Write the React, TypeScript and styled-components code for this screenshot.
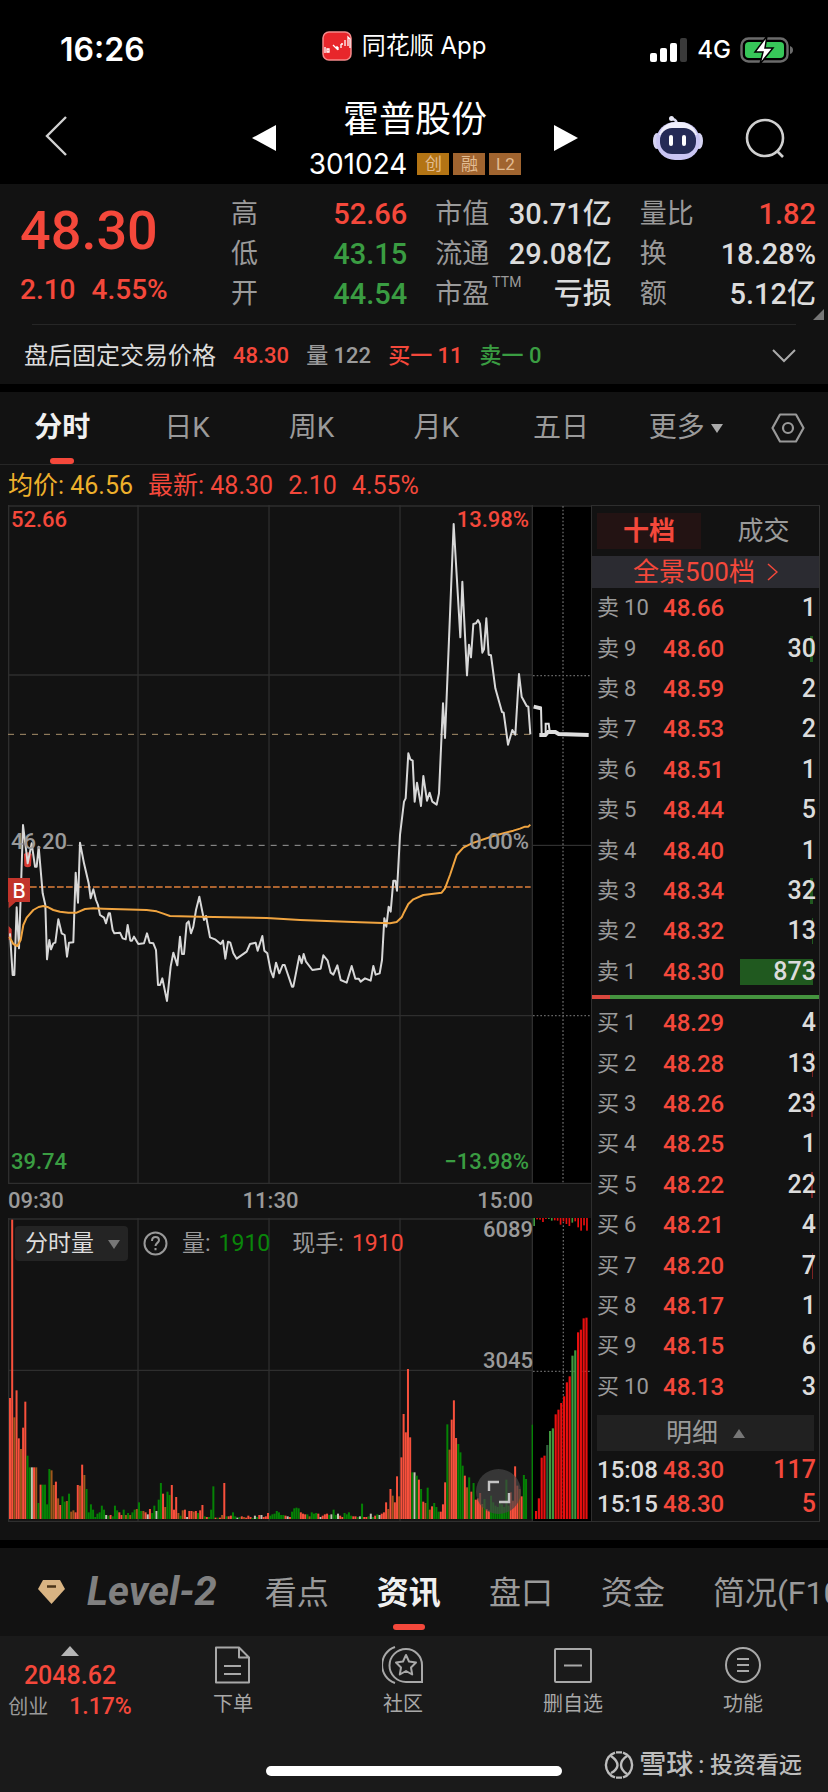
import React from 'react';
import styled, { createGlobalStyle } from 'styled-components';

const RED = '#f4483b';
const GREEN = '#3a9d42';
const GREY = '#9a9a9a';
const LIGHT = '#dcdcdc';
const LINE = '#2e2e2e';

const GlobalStyle = createGlobalStyle`
  *, *::before, *::after { box-sizing: border-box; }
  body {
    margin: 0;
    background: #1a1a1a;
    color: ${LIGHT};
    font-family: Roboto, "Noto Sans CJK SC", sans-serif;
    font-size: 24px;
    line-height: 1;
  }
  button, select {
    margin: 0;
    padding: 0;
    border: 0;
    background: none;
    color: inherit;
    font: inherit;
    appearance: none;
    cursor: pointer;
  }
  a { color: inherit; text-decoration: none; }
  svg { display: block; }
  dl, dd { margin: 0; }
`;

type Tone = 'red' | 'green' | 'grey' | 'light';
const tones: Record<Tone, string> = { red: RED, green: GREEN, grey: GREY, light: LIGHT };

const Page = styled.div`
  display: flex;
  flex-direction: column;
  min-height: 100vh;
  overflow: hidden;
  background: #121212;
`;

/* ---------- status bar and title bar ---------- */

const StatusBar = styled.div`
  display: grid;
  grid-template-columns: 1fr auto 1fr;
  align-items: center;
  height: 92px;
  padding: 0 34px 0 14px;
  background: #000;
  color: #fff;
`;
const Clock = styled.time`
  padding: 8px 0 0 46px;
  font: 600 32px/1 Inter, sans-serif;
`;
const AppName = styled.div`
  display: flex;
  align-items: center;
  gap: 10px;
  font-family: Inter, "Noto Sans CJK SC", sans-serif;
  font-size: 24px;
`;
const Signals = styled.div`
  display: flex;
  align-items: center;
  justify-content: flex-end;
  gap: 9px;
  padding-top: 8px;
  font: 500 24px/1 Inter, sans-serif;
`;
const TitleBar = styled.header`
  display: grid;
  grid-template-columns: 1fr 326px 1fr;
  align-items: center;
  height: 92px;
  padding: 0 43px 0 45px;
  background: #000;
  color: #fff;
`;
const TitleGroup = styled.div`
  display: flex;
  align-items: center;
  justify-content: space-between;
`;
const TitleText = styled.div`
  display: flex;
  flex-direction: column;
  align-items: center;
  gap: 12px;
`;
const StockName = styled.h1`
  margin: 0;
  font-size: 36px;
  font-weight: 400;
  line-height: 40px;
`;
const CodeRow = styled.div`
  display: flex;
  align-items: center;
  gap: 4px;
  height: 24px;
  font-family: Inter, sans-serif;
  font-size: 28px;
`;
const Code = styled.span`
  margin-right: 6px;
`;
const Badge = styled.span<{ $bg: string }>`
  width: 32px;
  height: 22px;
  background: ${(p) => p.$bg};
  color: #e2bc92;
  font: 17px/22px Roboto, "Noto Sans CJK SC", sans-serif;
  text-align: center;
`;
const TitleActions = styled.div`
  display: flex;
  align-items: center;
  justify-content: flex-end;
  gap: 42px;
`;

/* ---------- quote summary ---------- */

const Quote = styled.section`
  position: relative;
  padding-top: 10px;
`;
const QuoteGrid = styled.div`
  display: grid;
  grid-template-columns: 183px repeat(3, 1fr);
  gap: 28px;
  padding: 0 12px 0 20px;
`;
const PriceBlock = styled.div`
  display: flex;
  flex-direction: column;
  gap: 18px;
  padding-top: 10px;
  color: ${RED};
  white-space: nowrap;
`;
const LastPrice = styled.strong`
  font-size: 54px;
  font-weight: 500;
  line-height: 54px;
`;
const Change = styled.div`
  display: flex;
  gap: 16px;
  font-size: 28px;
  font-weight: 500;
  line-height: 28px;
`;
const StatList = styled.dl`
  display: flex;
  flex-direction: column;
`;
const Stat = styled.div`
  display: flex;
  align-items: center;
  justify-content: space-between;
  height: 40px;
  white-space: nowrap;
`;
const StatName = styled.dt`
  display: flex;
  align-items: flex-start;
  color: ${GREY};
  font-size: 27px;
`;
const Sup = styled.sup`
  margin: -6px 0 0 3px;
  font-size: 14px;
  line-height: 14px;
`;
const StatValue = styled.dd<{ $tone: Tone }>`
  color: ${(p) => tones[p.$tone]};
  font-size: 29px;
  font-weight: 500;
`;
const Corner = styled.i`
  position: absolute;
  right: 4px;
  bottom: 64px;
  border-bottom: 11px solid #777;
  border-left: 11px solid transparent;
`;
const AfterHours = styled.div`
  display: flex;
  align-items: center;
  height: 60px;
  margin: 10px 32px 0;
  padding-top: 3px;
  border-top: 1px solid #262626;
`;
const AfterItems = styled.div`
  display: flex;
  flex: 1;
  align-items: center;
  gap: 17px;
  margin-left: -8px;
  white-space: nowrap;
`;
const AfterTitle = styled.span`
  color: ${LIGHT};
  font-size: 24px;
`;
const AfterItem = styled.span<{ $tone: Tone }>`
  color: ${(p) => tones[p.$tone]};
  font-size: 22px;
  font-weight: 500;
`;
const Gap = styled.div`
  height: 8px;
  flex: none;
  background: #000;
`;

/* ---------- period tabs ---------- */

const PeriodTabs = styled.nav`
  display: grid;
  grid-template-columns: repeat(6, 1fr) 80px;
  height: 73px;
  border-bottom: 1px solid #262626;
`;
const TabButton = styled.button<{ $active?: boolean }>`
  position: relative;
  display: flex;
  align-items: center;
  justify-content: center;
  gap: 6px;
  color: ${(p) => (p.$active ? '#f0f0f0' : GREY)};
  font-size: 28px;
  font-weight: ${(p) => (p.$active ? 700 : 400)};
`;
const Underline = styled.i<{ $width: number }>`
  position: absolute;
  bottom: 0;
  left: 50%;
  width: ${(p) => p.$width}px;
  height: 6px;
  border-radius: 3px;
  background: ${RED};
  transform: translateX(-50%);
`;
const Legend = styled.div`
  display: flex;
  align-items: center;
  gap: 15px;
  height: 40px;
  padding: 0 8px;
  color: ${RED};
  font-size: 25px;
`;
const Average = styled.span`
  color: #eeb02c;
`;

/* ---------- chart area ---------- */

const Board = styled.main`
  display: grid;
  grid-template-columns: minmax(0, 1fr) 58px 229px;
  margin: 0 8px 18px;
`;
const ChartColumn = styled.div`
  display: flex;
  flex-direction: column;
`;
const PricePane = styled.div`
  position: relative;
  height: 679px;
`;
const VolumePane = styled.div`
  position: relative;
  height: 304px;
`;
const Plot = styled.svg<{ $bg?: string }>`
  width: 100%;
  height: 100%;
  background: ${(p) => p.$bg ?? 'none'};
`;
const TimeAxis = styled.div`
  display: grid;
  grid-template-columns: 1fr auto 1fr;
  align-items: center;
  height: 34px;
  color: ${GREY};
  font-size: 22px;
  font-weight: 500;
`;
const RightTime = styled.span`
  text-align: right;
`;
const PlotLabel = styled.span<{ $tone: Tone; $top: string; $right?: boolean }>`
  position: absolute;
  top: ${(p) => p.$top};
  ${(p) => (p.$right ? 'right: 4px' : 'left: 3px')};
  color: ${(p) => tones[p.$tone]};
  font-size: 22px;
  font-weight: 500;
`;
const VolumeLabel = styled(PlotLabel)`
  right: 0;
`;
const BuyMark = styled.span`
  position: absolute;
  top: 55%;
  left: 0;
  width: 22px;
  height: 24px;
  background: #c2342b;
  color: #fff;
  font: 500 20px/26px Inter, sans-serif;
  text-align: center;
`;
const VolumeHead = styled.div`
  position: absolute;
  top: 8px;
  left: 7px;
  display: flex;
  align-items: center;
  color: ${GREY};
  white-space: nowrap;
`;
const SelectBox = styled.label`
  position: relative;
  display: block;
  width: 113px;
  height: 35px;
  margin-right: 15px;
`;
const KindSelect = styled.select`
  width: 100%;
  height: 100%;
  padding-left: 10px;
  border-radius: 4px;
  background: #242424;
  color: ${LIGHT};
  font-size: 23px;
`;
const Caret = styled.i<{ $up?: boolean; $color?: string }>`
  border: 6px solid transparent;
  ${(p) => (p.$up ? 'border-bottom: 9px solid #777; border-top: 0' : `border-top: 9px solid ${p.$color ?? '#777'}; border-bottom: 0`)};
`;
const SelectCaret = styled(Caret)`
  position: absolute;
  top: 14px;
  right: 8px;
  pointer-events: none;
`;
const HeadItem = styled.span`
  display: flex;
  gap: 8px;
  margin-left: 14px;
  font-size: 23px;
  & + & { margin-left: 22px; }
`;
const HeadValue = styled.span<{ $color: string }>`
  color: ${(p) => p.$color};
`;
const ExpandButton = styled.button`
  position: absolute;
  right: 12px;
  bottom: 8px;
  display: grid;
  place-items: center;
  width: 45px;
  height: 45px;
  border-radius: 50%;
  background: rgba(70, 70, 70, 0.7);
`;
const ExtGap = styled.div`
  height: 34px;
`;

/* ---------- order book ---------- */

const Book = styled.aside`
  display: flex;
  flex-direction: column;
  border: 1px solid ${LINE};
  border-right-color: #333;
`;
const BookTabs = styled.div`
  display: grid;
  grid-template-columns: 104px 1fr;
  align-items: center;
  gap: 12px;
  height: 50px;
  padding: 0 5px;
`;
const BookTab = styled.button<{ $active?: boolean }>`
  height: 36px;
  background: ${(p) => (p.$active ? '#231313' : 'none')};
  color: ${(p) => (p.$active ? RED : GREY)};
  font-size: 26px;
  font-weight: ${(p) => (p.$active ? 700 : 400)};
`;
const Panorama = styled.a`
  display: flex;
  align-items: center;
  justify-content: center;
  gap: 12px;
  height: 32px;
  background: #2b2b31;
  color: ${RED};
  font-size: 26px;
`;
const Levels = styled.table`
  display: flex;
  flex: 1;
  flex-direction: column;
`;
const LevelBody = styled.tbody`
  display: flex;
  flex: 1;
  flex-direction: column;
`;
const LevelRow = styled.tr`
  display: grid;
  flex: 1;
  grid-template-columns: 66px 1fr 82px;
  align-items: center;
  padding: 0 3px 0 5px;
`;
const LevelName = styled.th`
  display: flex;
  align-items: center;
  gap: 5px;
  padding: 0;
  color: ${GREY};
  font-size: 22px;
  font-weight: 400;
`;
const LevelPrice = styled.td`
  padding: 0;
  color: ${RED};
  font-size: 24px;
  font-weight: 500;
`;
const LevelQty = styled.td<{ $bar: number; $color: string; $tone?: Tone }>`
  height: 26px;
  padding: 0;
  background: linear-gradient(${(p) => p.$color}, ${(p) => p.$color}) no-repeat right 3px top / ${(p) => p.$bar}px 100%;
  color: ${(p) => tones[p.$tone ?? 'light']};
  font-size: 25px;
  font-weight: 500;
  line-height: 26px;
  text-align: right;
`;
const Ratio = styled.div`
  height: 4px;
  margin: 3px 0 4px;
  background: linear-gradient(to right, #d9483e 8%, #45943f 8%);
`;
const DetailButton = styled.button`
  display: flex;
  align-items: center;
  justify-content: center;
  gap: 15px;
  height: 36px;
  margin: 8px 5px 2px;
  background: #212121;
  color: ${GREY};
  font-size: 26px;
`;
const Deals = styled.table`
  display: block;
  tbody { display: block; }
  tr { height: 34px; }
`;
const DealTime = styled.th`
  padding: 0;
  font-size: 24px;
  font-weight: 500;
  text-align: left;
`;

/* ---------- bottom navigation ---------- */

const InfoTabs = styled.nav`
  display: flex;
  align-items: center;
  gap: 48px;
  height: 88px;
  padding-left: 38px;
  overflow: hidden;
  white-space: nowrap;
`;
const LevelTwo = styled.a`
  display: flex;
  align-items: center;
  gap: 22px;
  color: #808080;
  font-size: 40px;
  font-style: italic;
  font-weight: 700;
`;
const InfoTab = styled.a<{ $active?: boolean }>`
  position: relative;
  display: flex;
  flex: none;
  align-items: center;
  height: 82px;
  margin-bottom: 6px;
  padding-top: 8px;
  color: ${(p) => (p.$active ? '#f0f0f0' : GREY)};
  font-size: 32px;
  font-weight: ${(p) => (p.$active ? 700 : 400)};
`;
const BottomBar = styled.footer`
  flex: 1;
  background: #1a1a1a;
`;
const Actions = styled.div`
  display: grid;
  grid-template-columns: 148px repeat(4, 1fr);
  height: 112px;
`;
const IndexCell = styled.a`
  display: flex;
  flex-direction: column;
  align-items: center;
  gap: 7px;
  padding: 10px 8px 0 0;
  color: ${RED};
  font-size: 25px;
  font-weight: 500;
`;
const IndexRow = styled.span`
  display: flex;
  align-items: center;
  gap: 21px;
  font-size: 23px;
`;
const IndexName = styled.span`
  color: ${GREY};
  font-size: 20px;
  font-weight: 400;
`;
const Action = styled.button`
  display: flex;
  flex-direction: column;
  align-items: center;
  gap: 10px;
  padding-top: 10px;
  color: #a8a8a8;
  font-size: 20px;
`;
const HomeRow = styled.div`
  display: grid;
  grid-template-columns: 1fr 296px 1fr;
  align-items: center;
  height: 34px;
`;
const HomeBar = styled.i`
  grid-column: 2;
  height: 10px;
  margin-top: 12px;
  border-radius: 5px;
  background: #fff;
`;
const Watermark = styled.div`
  display: flex;
  align-items: center;
  justify-content: flex-end;
  gap: 5px;
  padding-right: 26px;
  color: #bdbdbd;
  font-size: 23px;
  font-weight: 500;
  white-space: nowrap;
`;
const Brand = styled.b`
  font-size: 27px;
  font-weight: 500;
`;

/* ---------- chart data ---------- */

const PRICE_PATH =
  '30,1300 38,1425 43,1425 50,1222 57,1345 69,975 77,1040 83,1090 95,1030 105,1100 110,1100 116,1040 128,1180 136,1215 141,1378 148,1320 153,1348 160,1330 166,1328 175,1258 185,1300 194,1305 201,1370 207,1328 220,1327 227,1118 234,1208 240,1028 252,1090 266,1150 272,1195 280,1168 288,1200 294,1215 300,1245 312,1253 318,1270 326,1240 330,1240 338,1290 343,1300 360,1298 368,1315 377,1318 383,1275 391,1322 396,1322 402,1310 415,1332 432,1330 441,1300 449,1328 460,1330 468,1350 474,1455 480,1455 487,1435 501,1503 512,1400 520,1358 532,1396 540,1310 546,1362 552,1362 560,1270 566,1264 573,1300 580,1280 588,1230 598,1190 612,1260 618,1248 630,1312 645,1318 662,1332 669,1322 676,1376 684,1325 691,1328 700,1360 710,1376 740,1355 750,1332 767,1328 773,1352 787,1308 793,1352 802,1360 812,1412 820,1432 828,1388 838,1420 848,1395 854,1395 876,1460 880,1460 898,1368 905,1390 911,1362 918,1385 937,1410 962,1406 970,1366 983,1382 992,1418 1000,1424 1012,1396 1022,1440 1040,1448 1055,1398 1066,1436 1076,1436 1082,1445 1095,1435 1112,1442 1120,1398 1127,1424 1139,1420 1146,1380 1153,1255 1159,1280 1166,1220 1172,1235 1180,1142 1186,1142 1191,1172 1200,1005 1212,905 1217,895 1225,760 1231,778 1238,782 1244,905 1251,848 1263,918 1270,828 1281,902 1289,878 1297,905 1310,914 1317,880 1329,610 1335,714 1361,72 1381,412 1387,245 1401,526 1407,434 1413,472 1420,372 1428,370 1434,360 1440,372 1447,458 1452,448 1459,355 1466,464 1473,466 1486,565 1506,636 1511,638 1524,734 1537,690 1546,704 1557,522 1565,590 1580,618 1585,620 1591,703';
const AVERAGE_PATH =
  '28,1310 40,1332 52,1338 62,1320 70,1275 80,1253 100,1230 116,1221 130,1218 145,1222 160,1230 180,1235 205,1238 230,1238 255,1227 280,1225 310,1226 440,1230 470,1234 490,1241 510,1248 600,1250 800,1254 900,1260 1080,1267 1170,1270 1190,1266 1205,1252 1213,1235 1225,1212 1240,1198 1270,1185 1325,1178 1335,1165 1350,1125 1370,1065 1390,1043 1415,1030 1480,1008 1540,992 1560,986 1575,980 1585,980 1591,974';

const VOLUMES =
  'r363 r898 o305 r386 r242 o210 r274 r352 g190 g155 w155 r155 o155 g48 r103 g103 g103 g44 g150 o146 o102 r112 o62 r42 g68 g52 o54 g76 o22 o26 r20 r102 o100 r163 o132 g90 g20 g44 g28 g6 g16 g20 g40 g28 w12 g10 r12 g8 g40 g26 r20 r12 g28 o12 g18 o12 g20 g28 o30 g50 g24 o24 r20 w14 r30 g18 g40 w24 g58 g108 r76 o36 g82 g72 r102 r28 r66 o18 g10 o26 r28 w6 r24 r24 o22 r24 g18 r26 r42 g8 r6 g6 g28 g98 r4 g4 r4 o12 r108 g8 r8 r10 g20 g8 w4 g6 r8 o6 r4 r10 r6 g3 w10 g6 r12 w12 r6 r8 r18 g10 g14 g16 g24 g20 g12 g12 r10 w8 r6 g22 g32 g34 g32 r20 r16 r14 g14 o8 g20 g16 g18 r16 w6 r10 r14 r16 g12 w14 g28 g12 w16 r10 r6 g18 g14 g20 g10 r8 r8 g6 w8 g46 r6 r6 g8 w16 g6 r10 g14 w12 r16 r20 r50 o30 r90 o70 r50 r128 o68 r185 r315 r260 r450 r245 g140 w140 g130 r118 g90 r52 o48 g94 o28 r38 g48 g36 g22 r22 r44 r110 g284 o208 r298 r356 r243 g225 g200 g160 r130 o95 g125 r82 g108 r58 r62 r78 o45 g60 r30 r25 g70 g50 g40 g36 g50 g44 g36 g118 g40 r80 r55 r158 r100 o90 r68 g132 g120 g0 g0 g283'.split(' ');
const BAR_COLORS: Record<string, string> = { r: '#f8503c', g: '#058205', o: '#a0561c', w: '#c4c4b4' };

const AUCTION = 'r24 r62 r184 r190 d222 g264 g272 r314 r328 r348 r368 r410 r428 g490 g506 r560 r568 r602 r604'.split(' ');
const AUCTION_TOP = 'g24 r4 r5 r12 r3 g3 g8 r7 r8 r20 r10 r18 r24 g14 r10 r28 r38 r22 r38'.split(' ');
const AUCTION_COLORS: Record<string, string> = { r: '#e80f0f', g: '#3f9a3f', d: '#2d5f3a' };

type Level = [string, string, number, number];
const SELLS: Level[] = [
  ['10', '48.66', 1, 0], ['9', '48.60', 30, 3], ['8', '48.59', 2, 0], ['7', '48.53', 2, 0], ['6', '48.51', 1, 0],
  ['5', '48.44', 5, 0], ['4', '48.40', 1, 0], ['3', '48.34', 32, 3], ['2', '48.32', 13, 1], ['1', '48.30', 873, 73],
];
const BUYS: Level[] = [
  ['1', '48.29', 4, 0], ['2', '48.28', 13, 1], ['3', '48.26', 23, 2], ['4', '48.25', 1, 0], ['5', '48.22', 22, 2],
  ['6', '48.21', 4, 0], ['7', '48.20', 7, 1], ['8', '48.17', 1, 0], ['9', '48.15', 6, 0], ['10', '48.13', 3, 0],
];

type StatItem = { name: string; value: string; tone: Tone; sup?: string };
const STATS: StatItem[][] = [
  [
    { name: '高', value: '52.66', tone: 'red' },
    { name: '低', value: '43.15', tone: 'green' },
    { name: '开', value: '44.54', tone: 'green' },
  ],
  [
    { name: '市值', value: '30.71亿', tone: 'light' },
    { name: '流通', value: '29.08亿', tone: 'light' },
    { name: '市盈', value: '亏损', tone: 'light', sup: 'TTM' },
  ],
  [
    { name: '量比', value: '1.82', tone: 'red' },
    { name: '换', value: '18.28%', tone: 'light' },
    { name: '额', value: '5.12亿', tone: 'light' },
  ],
];

/* ---------- icons ---------- */

const AppLogo = () => (
  <svg width="30" height="30" viewBox="0 0 30 30">
    <rect x="1" y="1" width="28" height="28" rx="6" fill="#e8262b" stroke="#f5898a" strokeWidth="1.5" />
    <path d="M3 16v6M5 18v3h2v-3zM11 14l4 4v-3M16 16v3M19 13v4M19 13h2M23 9v6M26 15V6l2 2v9" stroke="#fff" strokeWidth="1.3" fill="none" />
  </svg>
);
const SignalIcon = () => (
  <svg width="38" height="24" viewBox="0 0 38 24">
    <rect x="0" y="15" width="7" height="9" rx="2" fill="#fff" />
    <rect x="10" y="10" width="7" height="14" rx="2" fill="#fff" />
    <rect x="20" y="5" width="7" height="19" rx="2" fill="#fff" />
    <rect x="30" y="0" width="7" height="24" rx="2" fill="#3a3a3a" />
  </svg>
);
const BatteryIcon = () => (
  <svg width="54" height="28" viewBox="0 0 54 28">
    <rect x="1.5" y="2.5" width="46" height="23" rx="7" fill="none" stroke="#6b6b6b" strokeWidth="2.4" />
    <rect x="5" y="6" width="39" height="16" rx="4" fill="#37c759" />
    <path d="M50 10q3 1 3 4t-3 4z" fill="#6b6b6b" />
    <path d="M27 0L15 16h8l-3 12 13-16h-8z" fill="#fff" stroke="#000" strokeWidth="1.5" />
  </svg>
);
const BackIcon = () => (
  <svg width="24" height="40" viewBox="0 0 24 40">
    <path d="M21 1L2 20l19 19" fill="none" stroke="#d0d0d0" strokeWidth="2.4" />
  </svg>
);
const Arrow = ({ flip }: { flip?: boolean }) => (
  <svg width="24" height="26" viewBox="0 0 24 26">
    <path d={flip ? 'M0 0v26l24-13z' : 'M24 0v26L0 13z'} fill="#fff" />
  </svg>
);
const RobotIcon = () => (
  <svg width="50" height="46" viewBox="0 0 50 46">
    <path d="M24 10c0-3-1-5-4-6" stroke="#d8d8ee" strokeWidth="2.4" fill="none" />
    <circle cx="18.5" cy="3.5" r="2.5" fill="#e6e6f4" />
    <ellipse cx="4" cy="26" rx="4" ry="8" fill="#d5d3f2" />
    <ellipse cx="46" cy="26" rx="4" ry="8" fill="#d5d3f2" />
    <rect x="3" y="7" width="44" height="38" rx="19" fill="#c9c5f3" />
    <path d="M6 20q4-13 19-13t19 13" fill="#efeefb" />
    <rect x="7" y="13" width="36" height="26" rx="12" fill="#252b56" />
    <rect x="16" y="20" width="4" height="11" rx="2" fill="#fff" />
    <rect x="29" y="20" width="4" height="11" rx="2" fill="#fff" />
  </svg>
);
const SearchIcon = () => (
  <svg width="40" height="40" viewBox="0 0 40 40" fill="none" stroke="#d0d0d0" strokeWidth="2.6">
    <circle cx="20" cy="20" r="18" />
    <path d="M32 33l6 6" />
  </svg>
);
const ChevronDown = () => (
  <svg width="24" height="14" viewBox="0 0 24 14">
    <path d="M1 1l11 11L23 1" fill="none" stroke="#aaa" strokeWidth="2" />
  </svg>
);
const HexIcon = () => (
  <svg width="34" height="30" viewBox="0 0 34 30" fill="none" stroke="#999" strokeWidth="2.2">
    <path d="M9 1.5h16L32.5 15 25 28.500H9L1.500 15z" strokeLinejoin="round" />
    <circle cx="17" cy="15" r="5" />
  </svg>
);
const HelpIcon = () => (
  <svg width="25" height="25" viewBox="0 0 25 25" fill="none" stroke="#999" strokeWidth="2">
    <circle cx="12.500" cy="12.500" r="11" />
    <path d="M9 10q0-4 3.500-4t3.500 3.300c0 2.500-3.500 2.700-3.500 5.700M12.500 17v2.200" />
  </svg>
);
const ExpandIcon = () => (
  <svg width="24" height="24" viewBox="0 0 24 24" fill="none" stroke="#c4c4c4" strokeWidth="2.400">
    <path d="M2 11V2h10M22 13v9H12" />
  </svg>
);
const ChevronRight = () => (
  <svg width="11" height="18" viewBox="0 0 11 18">
    <path d="M1 1l9 8-9 8" fill="none" stroke={RED} strokeWidth="1.500" />
  </svg>
);
const GemIcon = () => (
  <svg width="27" height="24" viewBox="0 0 27 24">
    <path d="M5 0h17l5 9-13.500 15L0 9z" fill="#d9b483" />
    <path d="M9 6.500h9" stroke="#4a3418" strokeWidth="2.500" />
  </svg>
);
const UpIcon = () => (
  <svg width="18" height="10" viewBox="0 0 18 10">
    <path d="M9 0l9 10H0z" fill="#b5b5b5" />
  </svg>
);
const DocIcon = () => (
  <svg width="40" height="38" viewBox="0 0 40 38" fill="none" stroke="#a8a8a8" strokeWidth="2">
    <path d="M3 1.500h23l10 10v25H3zM26 1.500v10h10M11 20h17M11 28h17" strokeLinejoin="round" />
  </svg>
);
const CommunityIcon = () => (
  <svg width="42" height="38" viewBox="0 0 42 38" fill="none" stroke="#a8a8a8" strokeWidth="2">
    <path d="M13 1A19 19 0 0 0 13 37" />
    <path d="M24 3a16 16 0 0 0 0 33h16V19A16 16 0 0 0 24 3z" />
    <path d="M24 9l3 6.500 7 1-5 5 1.200 7L24 25l-6.200 3.500 1.200-7-5-5 7-1z" strokeLinejoin="round" />
  </svg>
);
const RemoveIcon = () => (
  <svg width="38" height="38" viewBox="0 0 38 38" fill="none" stroke="#a8a8a8" strokeWidth="2">
    <rect x="1" y="3" width="36" height="33" rx="1" />
    <path d="M10 19.500h18" />
  </svg>
);
const MenuIcon = () => (
  <svg width="36" height="38" viewBox="0 0 36 38" fill="none" stroke="#a8a8a8" strokeWidth="2">
    <circle cx="18" cy="19" r="17" />
    <path d="M12 13h12M12 19h12M12 25h12" />
  </svg>
);
const SnowballIcon = () => (
  <svg width="30" height="30" viewBox="0 0 30 30" fill="none" stroke="#bdbdbd" strokeWidth="2.400">
    <path d="M11 2.600A13 13 0 0 0 11 27.400M19 27.400A13 13 0 0 0 19 2.600M12 27.600h6M12 2.400h6" />
    <path d="M7 6q7 5 6.500 9.500T7 23M23 6q-6 4-6 9t6 9" strokeWidth="2.400" />
  </svg>
);

/* ---------- charts ---------- */

const PriceChart = () => (
  <PricePane>
    <Plot viewBox="24 15 1575 2037" preserveAspectRatio="none">
      <g stroke={LINE} strokeWidth="4" fill="none">
        <path d="M24 18H1599M24 525H1599M24 1547H1599M24 2050H1599M26 15V2052M414 15V2052M807 15V2052M1200 15V2052M1597 15V2052" />
      </g>
      <path d="M24 703H1592" stroke="#a8906a" strokeWidth="3" strokeDasharray="18 18" />
      <path d="M200 1036H1400" stroke="#9a9a9a" strokeWidth="3" strokeDasharray="18 18" />
      <path d="M90 1161H1592" stroke="#e07f3a" strokeWidth="5" strokeDasharray="20 7" />
      <path d="M26 1278l9 10v25l-9 8zM72 1062q12-10 23 0l-2 36q-10 8-20 0z" fill="#d83a32" />
      <path d="M26 1205h22L26 1225z" fill="#c2342b" />
      <polyline points={PRICE_PATH} fill="none" stroke="#d8d8d8" strokeWidth="6" strokeLinejoin="round" />
      <polyline points={AVERAGE_PATH} fill="none" stroke="#f0a440" strokeWidth="6" strokeLinejoin="round" />
    </Plot>
    <PlotLabel $tone="red" $top="4px">52.66</PlotLabel>
    <PlotLabel $tone="red" $top="4px" $right>13.98%</PlotLabel>
    <PlotLabel $tone="grey" $top="326px">46.20</PlotLabel>
    <PlotLabel $tone="grey" $top="326px" $right>0.00%</PlotLabel>
    <PlotLabel $tone="green" $top="646px">39.74</PlotLabel>
    <PlotLabel $tone="green" $top="646px" $right>−13.98%</PlotLabel>
    <BuyMark>B</BuyMark>
  </PricePane>
);

const VolumeChart = () => (
  <VolumePane>
    <Plot viewBox="24 24 1575 912" preserveAspectRatio="none">
      <g stroke={LINE} strokeWidth="4" fill="none">
        <path d="M24 27H1599M24 481H1599M24 934H1599M26 24V936M414 24V936M807 24V936M1200 24V936M1597 24V936" />
      </g>
      {VOLUMES.map((v, i) => {
        const h = Number(v.slice(1));
        return <rect key={i} x={27 + i * 6.56} y={927 - h} width="6" height={h} fill={BAR_COLORS[v[0]]} />;
      })}
    </Plot>
    <VolumeLabel $tone="grey" $top="1px" $right>6089</VolumeLabel>
    <VolumeLabel $tone="grey" $top="132px" $right>3045</VolumeLabel>
    <VolumeHead>
      <SelectBox>
        <KindSelect aria-label="指标" defaultValue="分时量">
          <option>分时量</option>
        </KindSelect>
        <SelectCaret />
      </SelectBox>
      <HelpIcon />
      <HeadItem>量: <HeadValue $color="#0a860a">1910</HeadValue></HeadItem>
      <HeadItem>现手: <HeadValue $color={RED}>1910</HeadValue></HeadItem>
    </VolumeHead>
    <ExpandButton aria-label="全屏"><ExpandIcon /></ExpandButton>
  </VolumePane>
);

const AuctionColumn = () => (
  <ChartColumn>
    <PricePane>
      <Plot $bg="#000" viewBox="1599 15 174 2037" preserveAspectRatio="none">
        <path d="M1599 18H1773M1599 1036H1773M1599 2050H1773" stroke="#3a3a3a" strokeWidth="3" />
        <path d="M1689 18V2050M1599 527H1773M1599 1547H1773" stroke="#666" strokeWidth="4" strokeDasharray="5 6" />
        <path d="M1601 620l22 5" stroke="#dedede" strokeWidth="12" />
        <path d="M1623 620l2 85h12v-34h9l3 22" fill="none" stroke="#dedede" strokeWidth="6" />
        <path d="M1618 705h18l8-9h22l10 6 90 3" fill="none" stroke="#dedede" strokeWidth="12" />
      </Plot>
    </PricePane>
    <ExtGap />
    <VolumePane>
      <Plot $bg="#000" viewBox="1599 24 174 912" preserveAspectRatio="none">
        <path d="M1690 24V927M1599 484H1773" stroke="#666" strokeWidth="4" strokeDasharray="5 6" />
        <path d="M1599 935H1773" stroke={LINE} strokeWidth="4" />
        {AUCTION.map((v, i) => {
          const h = Number(v.slice(1));
          return <rect key={i} x={1605 + i * 8.4} y={927 - h} width="6.5" height={h} fill={AUCTION_COLORS[v[0]]} />;
        })}
        {AUCTION_TOP.map((v, i) => (
          <rect key={i} x={1600 + i * 8.8} y="24" width="5" height={v.slice(1)} fill={AUCTION_COLORS[v[0]]} />
        ))}
      </Plot>
    </VolumePane>
  </ChartColumn>
);

const LevelTable = ({ side, rows, color }: { side: string; rows: Level[]; color: string }) => (
  <Levels>
    <LevelBody>
      {rows.map(([n, price, qty, bar]) => (
        <LevelRow key={n}>
          <LevelName scope="row"><span>{side}</span><span>{n}</span></LevelName>
          <LevelPrice>{price}</LevelPrice>
          <LevelQty $bar={bar} $color={color}>{qty}</LevelQty>
        </LevelRow>
      ))}
    </LevelBody>
  </Levels>
);

const OrderBook = () => (
  <Book>
    <BookTabs>
      <BookTab $active>十档</BookTab>
      <BookTab>成交</BookTab>
    </BookTabs>
    <Panorama href="#depth">全景500档<ChevronRight /></Panorama>
    <LevelTable side="卖" rows={SELLS} color="#20591f" />
    <Ratio />
    <LevelTable side="买" rows={BUYS} color="#7a2222" />
    <DetailButton>明细<Caret $up /></DetailButton>
    <Deals>
      <tbody>
        {[['15:08', '117'], ['15:15', '5']].map(([t, q]) => (
          <LevelRow key={t}>
            <DealTime scope="row">{t}</DealTime>
            <LevelPrice>48.30</LevelPrice>
            <LevelQty $bar={0} $color="transparent" $tone="red">{q}</LevelQty>
          </LevelRow>
        ))}
      </tbody>
    </Deals>
  </Book>
);

export default function App() {
  return (
    <Page>
      <GlobalStyle />
      <StatusBar>
        <Clock>16:26</Clock>
        <AppName><AppLogo />同花顺 App</AppName>
        <Signals><SignalIcon />4G<BatteryIcon /></Signals>
      </StatusBar>
      <TitleBar>
        <div><button aria-label="返回"><BackIcon /></button></div>
        <TitleGroup>
          <button aria-label="上一只"><Arrow /></button>
          <TitleText>
            <StockName>霍普股份</StockName>
            <CodeRow>
              <Code>301024</Code>
              <Badge $bg="#b37414">创</Badge>
              <Badge $bg="#a0642f">融</Badge>
              <Badge $bg="#a0642f">L2</Badge>
            </CodeRow>
          </TitleText>
          <button aria-label="下一只"><Arrow flip /></button>
        </TitleGroup>
        <TitleActions>
          <button aria-label="助手"><RobotIcon /></button>
          <button aria-label="搜索"><SearchIcon /></button>
        </TitleActions>
      </TitleBar>

      <Quote>
        <QuoteGrid>
          <PriceBlock>
            <LastPrice>48.30</LastPrice>
            <Change><span>2.10</span><span>4.55%</span></Change>
          </PriceBlock>
          {STATS.map((col, i) => (
            <StatList key={i}>
              {col.map((s) => (
                <Stat key={s.name}>
                  <StatName>{s.name}{s.sup && <Sup>{s.sup}</Sup>}</StatName>
                  <StatValue $tone={s.tone}>{s.value}</StatValue>
                </Stat>
              ))}
            </StatList>
          ))}
        </QuoteGrid>
        <Corner />
        <AfterHours>
          <AfterItems>
            <AfterTitle>盘后固定交易价格</AfterTitle>
            <AfterItem $tone="red">48.30</AfterItem>
            <AfterItem $tone="grey">量 122</AfterItem>
            <AfterItem $tone="red">买一 11</AfterItem>
            <AfterItem $tone="green">卖一 0</AfterItem>
          </AfterItems>
          <button aria-label="展开"><ChevronDown /></button>
        </AfterHours>
      </Quote>
      <Gap />

      <PeriodTabs>
        <TabButton $active>分时<Underline $width={24} /></TabButton>
        <TabButton>日K</TabButton>
        <TabButton>周K</TabButton>
        <TabButton>月K</TabButton>
        <TabButton>五日</TabButton>
        <TabButton>更多<Caret $color="#aaa" /></TabButton>
        <TabButton aria-label="设置"><HexIcon /></TabButton>
      </PeriodTabs>
      <Legend>
        <Average>均价: 46.56</Average>
        <span>最新: 48.30</span>
        <span>2.10</span>
        <span>4.55%</span>
      </Legend>

      <Board>
        <ChartColumn>
          <PriceChart />
          <TimeAxis><span>09:30</span><span>11:30</span><RightTime>15:00</RightTime></TimeAxis>
          <VolumeChart />
        </ChartColumn>
        <AuctionColumn />
        <OrderBook />
      </Board>
      <Gap />

      <InfoTabs>
        <LevelTwo href="#level2"><GemIcon />Level-2</LevelTwo>
        <InfoTab href="#view">看点</InfoTab>
        <InfoTab href="#news" $active>资讯<Underline $width={32} /></InfoTab>
        <InfoTab href="#depth">盘口</InfoTab>
        <InfoTab href="#funds">资金</InfoTab>
        <InfoTab href="#f10">简况(F10)</InfoTab>
      </InfoTabs>
      <BottomBar>
        <Actions>
          <IndexCell href="#index">
            <UpIcon />
            <span>2048.62</span>
            <IndexRow><IndexName>创业</IndexName>1.17%</IndexRow>
          </IndexCell>
          <Action><DocIcon />下单</Action>
          <Action><CommunityIcon />社区</Action>
          <Action><RemoveIcon />删自选</Action>
          <Action><MenuIcon />功能</Action>
        </Actions>
        <HomeRow>
          <HomeBar />
          <Watermark><SnowballIcon /><Brand>雪球</Brand>: 投资看远</Watermark>
        </HomeRow>
      </BottomBar>
    </Page>
  );
}
